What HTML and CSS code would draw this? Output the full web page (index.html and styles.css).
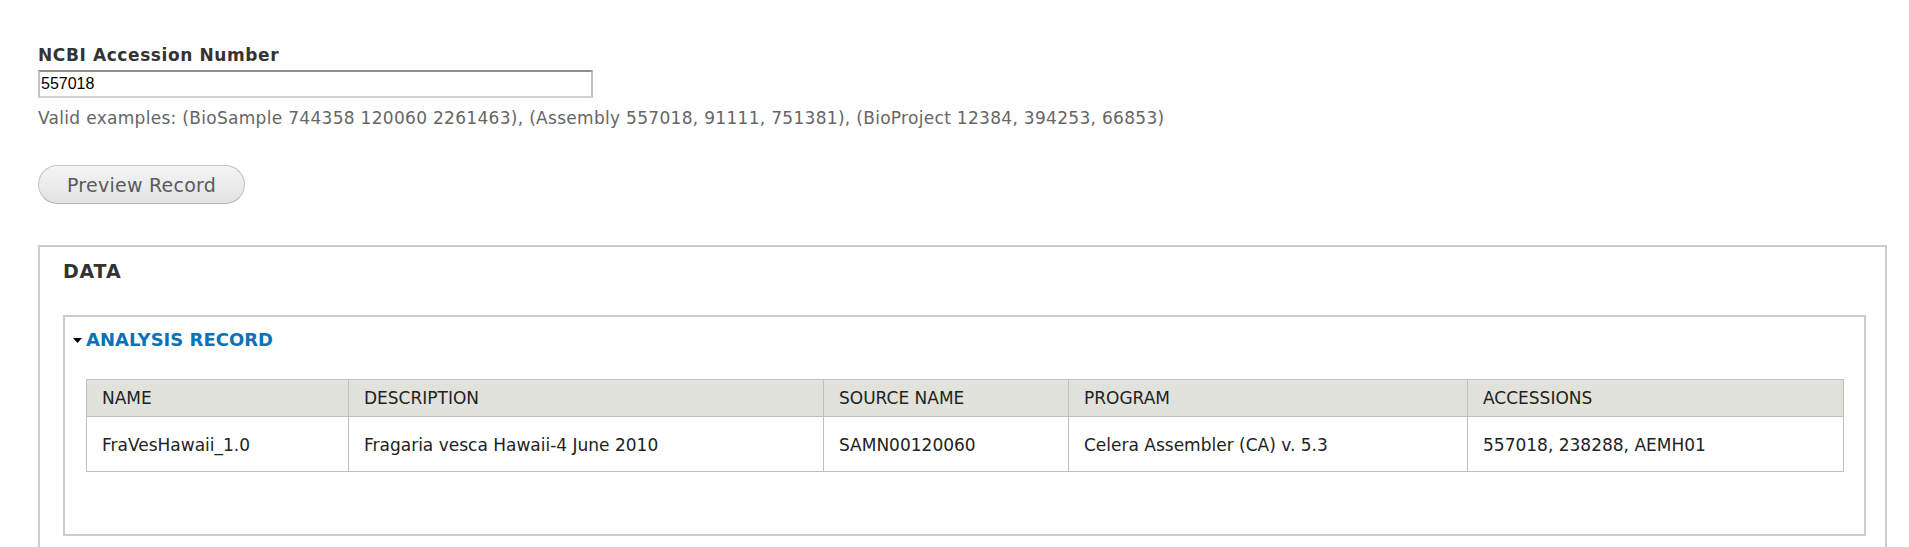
FILE: index.html
```html
<!DOCTYPE html>
<html lang="en">
<head>
<meta charset="utf-8">
<title>NCBI Accession</title>
<link rel="stylesheet" href="styles.css">
</head>
<body>
<div class="page">
  <div class="field">
    <label class="field-label" for="acc">NCBI Accession Number</label>
    <input class="text-input" id="acc" type="text" value="557018">
    <div class="help">Valid examples: (BioSample 744358 120060 2261463), (Assembly 557018, 91111, 751381), (BioProject 12384, 394253, 66853)</div>
  </div>
  <div class="actions">
    <button class="btn" type="button">Preview Record</button>
  </div>
  <div class="fieldset outer">
    <div class="legend">DATA</div>
    <div class="fieldset inner">
      <div class="summary">
        <svg class="caret" width="9" height="5" viewBox="0 0 9 5"><polygon points="0,0 9,0 4.5,5" fill="#000"/></svg>
        <span class="summary-text">ANALYSIS RECORD</span>
      </div>
      <table class="records">
        <colgroup>
          <col class="c1"><col class="c2"><col class="c3"><col class="c4"><col>
        </colgroup>
        <thead>
          <tr><th>NAME</th><th>DESCRIPTION</th><th>SOURCE NAME</th><th>PROGRAM</th><th>ACCESSIONS</th></tr>
        </thead>
        <tbody>
          <tr><td>FraVesHawaii_1.0</td><td>Fragaria vesca Hawaii-4 June 2010</td><td>SAMN00120060</td><td>Celera Assembler (CA) v. 5.3</td><td>557018, 238288, AEMH01</td></tr>
        </tbody>
      </table>
    </div>
  </div>
</div>
</body>
</html>
```

FILE: styles.css
```css
html, body {
  margin: 0;
  padding: 0;
  background: #fff;
}
body {
  font-family: "DejaVu Sans", sans-serif;
  color: #333;
}
.page {
  padding: 45px 22px 0 38px;
}
.field {
  display: flex;
  flex-direction: column;
  align-items: flex-start;
}
.field-label {
  font-weight: bold;
  font-size: 17px;
  line-height: 20px;
  letter-spacing: 0.6px;
  color: #333;
}
.text-input {
  margin: 5px 0 0 0;
  width: 555px;
  height: 28px;
  box-sizing: border-box;
  border-style: solid;
  border-width: 2px;
  border-color: #8e8e8e #c2c2c2 #d2d2d2 #c2c2c2;
  padding: 0 1px;
  font-family: "Liberation Sans", Arial, sans-serif;
  font-size: 16px;
  color: #000;
  outline: none;
}
.help {
  margin-top: 10px;
  font-size: 17px;
  line-height: 20px;
  letter-spacing: 0.3px;
  color: #666;
}
.actions {
  margin-top: 37px;
}
.btn {
  font-family: "DejaVu Sans", sans-serif;
  font-size: 19px;
  line-height: 22px;
  letter-spacing: 0.25px;
  color: #5a5a5a;
  padding: 8px 28px 7px;
  border: 1px solid #c4c4c4;
  border-bottom-color: #b4b4b4;
  border-radius: 20px;
  background: linear-gradient(#f5f5f5, #e2e2e2);
  margin: 0;
}
.fieldset {
  border: 2px solid #ccc;
}
.outer {
  margin-top: 41px;
  padding: 13px 19px 40px 23px;
}
.legend {
  font-weight: bold;
  font-size: 19px;
  line-height: 22px;
  letter-spacing: 0.8px;
  color: #333;
}
.inner {
  margin-top: 33px;
  padding: 12px 20px 62px 8px;
}
.summary {
  display: flex;
  align-items: center;
  font-weight: bold;
  font-size: 18px;
  line-height: 22px;
  color: #0a72b8;
}
.caret {
  display: block;
  margin-right: 4px;
  margin-top: 1px;
}
.records {
  margin: 28px 0 0 13px;
  width: calc(100% - 13px);
  border-collapse: collapse;
  table-layout: fixed;
  border: 1px solid #bfc0ba;
  font-size: 17px;
  line-height: 20px;
  color: #222;
}
.c1 { width: 262px; }
.c2 { width: 475px; }
.c3 { width: 245px; }
.c4 { width: 399px; }
.records th {
  background: #e1e2dc;
  font-weight: normal;
  text-align: left;
  padding: 8px 15px;
  border: 1px solid #bfc0ba;
  white-space: nowrap;
}
.records td {
  padding: 18px 15px 16px;
  border: 1px solid #bfc0ba;
  white-space: nowrap;
}
```
